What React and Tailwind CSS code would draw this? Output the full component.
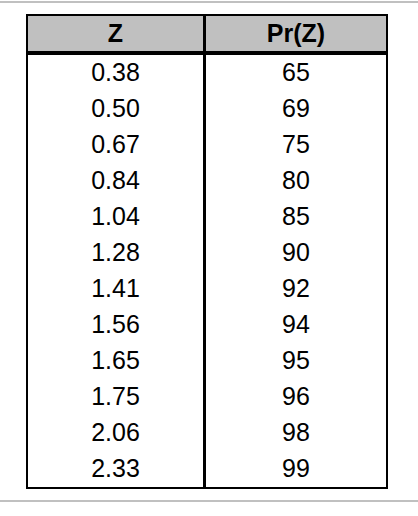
import React from 'react';

const rows = [
  ['0.38', '65'],
  ['0.50', '69'],
  ['0.67', '75'],
  ['0.84', '80'],
  ['1.04', '85'],
  ['1.28', '90'],
  ['1.41', '92'],
  ['1.56', '94'],
  ['1.65', '95'],
  ['1.75', '96'],
  ['2.06', '98'],
  ['2.33', '99'],
];

const App = () => {
  return (
    <div className="w-[418px] h-[516px] bg-white text-black font-['Liberation_Sans',Arial,sans-serif]">
      <div className="pt-px">
        <div className="h-[2px] bg-[#c0c0c0]" />
      </div>

      <div className="ml-[26px] mt-[11px] w-[362px] border-2 border-black">
        <div className="flex h-[39px] bg-[#c0c0c0] border-b-4 border-black text-[25px] font-bold">
          <div className="w-[178px] border-r-[3px] border-black flex items-center justify-center">Z</div>
          <div className="flex-1 flex items-center justify-center">Pr(Z)</div>
        </div>
        {rows.map(([z, pr]) => (
          <div key={z} className="flex h-9 text-[25px]">
            <div className="w-[178px] border-r-[3px] border-black flex items-center justify-center">{z}</div>
            <div className="flex-1 flex items-center justify-center">{pr}</div>
          </div>
        ))}
      </div>

      <div className="mt-[11px] h-[2px] bg-[#c0c0c0]" />
    </div>
  );
};

export default App;
